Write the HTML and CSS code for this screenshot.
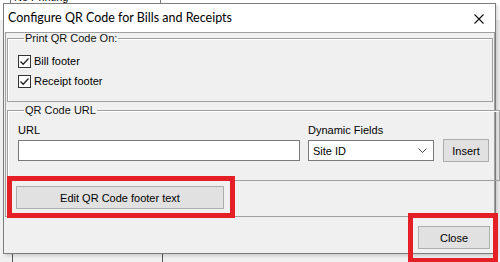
FILE: index.html
```html
<!DOCTYPE html>
<html lang="en">
<head>
    <meta charset="UTF-8">
    <meta name="viewport" content="width=device-width, initial-scale=1.0">
    <title>Configure QR Code for Bills and Receipts</title>
    <link rel="stylesheet" href="styles.css">
</head>
<body>
    <!-- the application window behind the dialog -->
    <div class="app">
        <div class="app-top">
            <div class="app-combo">
                <span>No Printing</span>
                <span class="app-arrow">&#9662;</span>
            </div>
        </div>
        <div class="app-grid">
            <div class="app-col"></div>
            <div class="app-col"></div>
        </div>
    </div>

    <div class="dialog">
        <div class="titlebar">
            <span class="title">Configure QR Code for Bills and Receipts</span>
            <svg class="close-x" width="10" height="10" viewBox="0 0 10 10">
                <path d="M0.5 0.5 L9.5 9.5 M9.5 0.5 L0.5 9.5" stroke="#111" stroke-width="1.1" fill="none"/>
            </svg>
        </div>

        <div class="dialog-body">
            <div class="panel">
                <fieldset class="group group-print">
                    <legend>Print QR Code On:</legend>
                    <label class="check">
                        <span class="check-box">
                            <svg width="11" height="11" viewBox="0 0 11 11">
                                <path d="M1.5 5.5 L4.2 8.3 L9.5 2.5" stroke="#222" stroke-width="1.3" fill="none"/>
                            </svg>
                        </span>
                        Bill footer
                    </label>
                    <label class="check">
                        <span class="check-box">
                            <svg width="11" height="11" viewBox="0 0 11 11">
                                <path d="M1.5 5.5 L4.2 8.3 L9.5 2.5" stroke="#222" stroke-width="1.3" fill="none"/>
                            </svg>
                        </span>
                        Receipt footer
                    </label>
                </fieldset>

                <fieldset class="group group-url">
                    <legend>QR Code URL</legend>
                    <div class="url-row">
                        <div class="field field-url">
                            <span class="field-label">URL</span>
                            <div class="textbox"></div>
                        </div>
                        <div class="field field-dyn">
                            <span class="field-label">Dynamic Fields</span>
                            <div class="combo">
                                <span>Site ID</span>
                                <svg width="9" height="6" viewBox="0 0 9 6">
                                    <path d="M0.5 0.5 L4.5 4.5 L8.5 0.5" stroke="#444" stroke-width="1" fill="none"/>
                                </svg>
                            </div>
                        </div>
                        <button class="btn btn-insert">Insert</button>
                    </div>
                </fieldset>

                <div class="edit-row">
                    <button class="btn btn-edit">Edit QR Code footer text</button>
                </div>
            </div>

            <div class="button-bar">
                <button class="btn btn-close">Close</button>
            </div>
        </div>
    </div>

    <!-- red annotation frames -->
    <div class="mark mark-edit"></div>
    <div class="mark mark-close"></div>
</body>
</html>
```

FILE: styles.css
```css
:root {
    --face: #f0f0f0;
    --line: #a0a0a0;
    --btn-bg: #e1e1e1;
    --btn-border: #adadad;
    --field-border: #7a7a7a;
    --mark: #e41f26;
}

* {
    margin: 0;
    padding: 0;
    box-sizing: border-box;
}

body {
    width: 500px;
    height: 262px;
    overflow: hidden;
    position: relative;
    background: var(--face);
    font-family: 'Liberation Sans', Arial, sans-serif;
    font-size: 11px;
    color: #000;
}

/* background app */
.app {
    height: 100%;
    display: flex;
    flex-direction: column;
}

.app-top {
    height: 20px;
    background: #fff;
    padding-left: 10px;
}

.app-combo {
    width: 151px;
    height: 18px;
    margin-top: -12px;
    border: 1px solid var(--field-border);
    background: #fff;
    display: flex;
    align-items: center;
    justify-content: space-between;
    padding: 0 6px 0 3px;
}

.app-arrow {
    font-size: 9px;
}

.app-grid {
    flex: 1;
    margin-left: 12px;
    display: grid;
    grid-template-columns: 150px 1fr;
}

.app-col {
    border-left: 1px solid #555;
}

/* dialog */
.dialog {
    position: absolute;
    left: 3px;
    top: 3px;
    width: 493px;
    height: 251px;
    border: 1px solid #7c7c7c;
    background: var(--face);
    display: flex;
    flex-direction: column;
    box-shadow: 2px 2px 3px rgba(0, 0, 0, 0.15);
}

.titlebar {
    height: 28px;
    background: #fff;
    display: flex;
    align-items: center;
    justify-content: space-between;
    padding: 0 11px 0 4px;
}

.title {
    font-family: Lato, sans-serif;
    font-size: 12.5px;
    line-height: 16px;
    margin-top: -1px;
}

.close-x {
    margin-top: 1px;
}

.dialog-body {
    flex: 1;
    display: flex;
    flex-direction: column;
}

.panel {
    margin-left: 1px;
    height: 185px;
    border: 1px solid var(--line);
    padding: 0 1px;
}

.group {
    border: 1px solid var(--line);
    box-shadow: inset 1px 1px 0 #fff;
    padding: 0 10px;
}

.group legend {
    margin-left: 6px;
    padding: 0 1px;
    line-height: 10px;
    color: #111;
}

.group-print {
    height: 69px;
    padding-top: 8px;
}

.check {
    height: 20px;
    display: flex;
    align-items: center;
    gap: 3px;
}

.check-box {
    width: 13px;
    height: 13px;
    border: 1px solid #333;
    background: #fff;
    display: flex;
    align-items: center;
    justify-content: center;
}

.group-url {
    margin-top: 3px;
    height: 76px;
    padding-top: 9px;
}

.url-row {
    display: flex;
    align-items: flex-end;
}

.field {
    display: flex;
    flex-direction: column;
    gap: 3px;
}

.field-label {
    line-height: 13px;
}

.textbox {
    width: 282px;
    height: 21px;
    border: 1px solid var(--field-border);
    background: #fff;
}

.field-dyn {
    margin-left: 8px;
}

.combo {
    width: 126px;
    height: 21px;
    border: 1px solid var(--field-border);
    background: #fff;
    display: flex;
    align-items: center;
    justify-content: space-between;
    padding: 0 6px 0 4px;
}

.btn {
    font-family: 'Liberation Sans', Arial, sans-serif;
    font-size: 11px;
    color: #000;
    background: var(--btn-bg);
    border: 1px solid var(--btn-border);
    height: 23px;
}

.btn-insert {
    width: 46px;
    margin-left: 9px;
    margin-bottom: -1px;
}

.edit-row {
    padding: 5px 0 0 9px;
}

.btn-edit {
    width: 208px;
}

.button-bar {
    flex: 1;
    display: flex;
    justify-content: flex-end;
    padding: 9px 5px 0 0;
}

.btn-close {
    width: 72px;
}

/* annotation frames */
.mark {
    position: absolute;
    border: 5px solid var(--mark);
}

.mark-edit {
    left: 7px;
    top: 176px;
    width: 228px;
    height: 42px;
}

.mark-close {
    left: 408px;
    top: 213px;
    width: 90px;
    height: 50px;
}
```
